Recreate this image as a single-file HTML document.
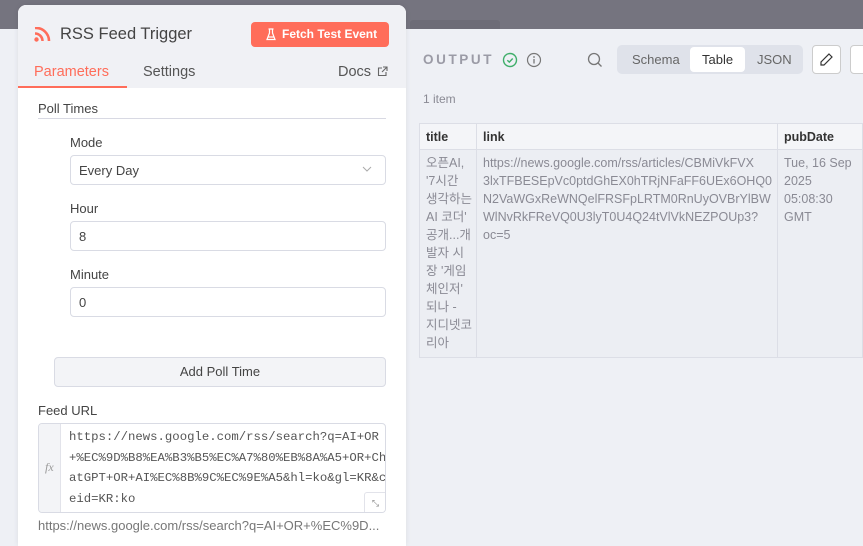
<!DOCTYPE html>
<html style="height:546px;overflow:hidden"><head><meta charset="utf-8"><style>
*{box-sizing:border-box;margin:0;padding:0}
body{width:863px;height:546px;overflow:hidden;background:#eef0f5;font-family:"Liberation Sans","Noto Sans CJK KR",sans-serif;position:relative}
.abs{position:absolute}
.strip{left:0;top:0;width:863px;height:29px;background:#75747f}
.panel{left:18px;top:5px;width:388px;height:541px;background:#fff;border-radius:8px 8px 0 0;overflow:hidden;box-shadow:0 0 6px rgba(0,0,0,.08)}
.head{left:0;top:0;width:388px;height:83px;background:#f0f1f5}
.lbl{font-size:13px;color:#444}
.inp{border:1px solid #d9dbe4;border-radius:4px;height:30px;font-size:13px;color:#444;padding:7px 8px;background:#fff}
.mono{font-family:"Liberation Mono",monospace;font-size:12.3px;color:#555;line-height:20.5px}
.cell{font-size:12.5px;color:#8a8a94;line-height:18px}
</style></head><body>
<div class="abs strip"></div>
<div class="abs" style="left:410px;top:20px;width:90px;height:9px;background:#6d6c77;border-radius:3px 3px 0 0"></div>

<div class="abs panel">
 <div class="abs head"></div>
 <svg class="abs" style="left:16px;top:22px" width="17" height="15" viewBox="0 0 17 15"><circle cx="2.5" cy="12.5" r="2.2" fill="#ff6d5a"/><path d="M1 6.5a7.5 7.5 0 0 1 7.5 7.5" stroke="#ff6d5a" stroke-width="2.6" fill="none"/><path d="M1 1a13 13 0 0 1 14 13" stroke="#ff6d5a" stroke-width="2.6" fill="none"/></svg>
 <div class="abs" style="left:42px;top:20px;font-size:16.5px;color:#444">RSS Feed Trigger</div>
 <div class="abs" style="left:233px;top:17px;width:138px;height:25px;background:#ff6d5a;border-radius:4px;color:#fff;font-size:12px;font-weight:bold;line-height:25px;padding-left:31px;white-space:nowrap">Fetch Test Event</div>
 <svg class="abs" style="left:248px;top:23px" width="10" height="13" viewBox="0 0 10 13"><path d="M3.5 1v4L1 11.5h8L6.5 5V1M2.5 1h5M2 9h6" stroke="#fff" stroke-width="1.2" fill="none"/></svg>
 <div class="abs" style="left:16px;top:59px;font-size:14.5px;color:#ff6d5a">Parameters</div>
 <div class="abs" style="left:0;top:81px;width:109px;height:2px;background:#ff6d5a"></div>
 <div class="abs" style="left:125px;top:59px;font-size:14.5px;color:#555">Settings</div>
 <div class="abs" style="left:320px;top:59px;font-size:14.5px;color:#555">Docs</div>
 <svg class="abs" style="left:359px;top:61px" width="11" height="11" viewBox="0 0 11 11"><path d="M5 2H1.5v7.5H9V6M6 1h4v4M10 1L5 6" stroke="#666" stroke-width="1.1" fill="none"/></svg>

 <div class="abs lbl" style="left:20px;top:96px">Poll Times</div>
 <div class="abs" style="left:20px;top:113px;width:348px;height:1px;background:#d8d9e3"></div>

 <div class="abs lbl" style="left:52px;top:130px">Mode</div>
 <div class="abs inp" style="left:52px;top:150px;width:316px">Every Day</div>
 <svg class="abs" style="left:344px;top:161px" width="10" height="7" viewBox="0 0 10 7"><path d="M1 1l4 4 4-4" stroke="#aaa" stroke-width="1" fill="none"/></svg>
 <div class="abs lbl" style="left:52px;top:196px">Hour</div>
 <div class="abs inp" style="left:52px;top:216px;width:316px">8</div>
 <div class="abs lbl" style="left:52px;top:262px">Minute</div>
 <div class="abs inp" style="left:52px;top:282px;width:316px">0</div>

 <div class="abs" style="left:36px;top:352px;width:332px;height:30px;background:#f3f4f7;border:1px solid #d9dbe4;border-radius:4px;text-align:center;line-height:28px;font-size:13px;color:#444">Add Poll Time</div>

 <div class="abs lbl" style="left:20px;top:398px">Feed URL</div>
 <div class="abs" style="left:20px;top:418px;width:348px;height:90px;border:1px solid #d9dbe4;border-radius:4px;background:#fff;overflow:hidden">
  <div class="abs" style="left:0;top:0;width:22px;height:90px;background:#f3f4f7;border-right:1px solid #e2e3ea"></div>
  <div class="abs" style="left:6px;top:36px;font-family:'Liberation Serif',serif;font-style:italic;font-size:12px;color:#999">fx</div>
  <div class="abs mono" style="left:30px;top:3px;width:320px;word-break:break-all">https://news.google.com/rss/search?q=AI+OR+%EC%9D%B8%EA%B3%B5%EC%A7%80%EB%8A%A5+OR+ChatGPT+OR+AI%EC%8B%9C%EC%9E%A5&amp;hl=ko&amp;gl=KR&amp;ceid=KR:ko</div>
  <div class="abs" style="left:325px;top:68px;width:22px;height:21px;border-left:1px solid #e2e3ea;border-top:1px solid #e2e3ea;border-radius:3px 0 0 0;background:#fff;font-size:9px;color:#888;text-align:center;line-height:20px">⤡</div>
 </div>
 <div class="abs" style="left:20px;top:513px;font-size:13px;color:#777">https://news.google.com/rss/search?q=AI+OR+%EC%9D...</div>
</div>

<div class="abs" style="left:423px;top:52px;font-size:13.5px;font-weight:bold;letter-spacing:2.6px;color:#9b9ba6">OUTPUT</div>
<svg class="abs" style="left:502px;top:52px" width="16" height="16" viewBox="0 0 16 16"><circle cx="8" cy="8" r="6.5" stroke="#3fae6a" stroke-width="1.4" fill="none"/><path d="M5.3 8.2l2 1.9 3.4-3.6" stroke="#3fae6a" stroke-width="1.4" fill="none"/></svg>
<svg class="abs" style="left:526px;top:52px" width="16" height="16" viewBox="0 0 16 16"><circle cx="8" cy="8" r="6.5" stroke="#777" stroke-width="1.2" fill="none"/><path d="M8 7v4.5" stroke="#777" stroke-width="1.3"/><circle cx="8" cy="5" r=".9" fill="#777"/></svg>
<svg class="abs" style="left:587px;top:52px" width="16" height="16" viewBox="0 0 16 16"><circle cx="7" cy="7" r="5.5" stroke="#777" stroke-width="1.3" fill="none"/><path d="M11 11l3.5 3.5" stroke="#777" stroke-width="1.3"/></svg>
<div class="abs" style="left:617px;top:45px;width:186px;height:29px;background:#dfe2ea;border-radius:5px"></div>
<div class="abs" style="left:690px;top:47px;width:55px;height:25px;background:#fff;border-radius:4px"></div>
<div class="abs" style="left:632px;top:52px;font-size:13px;color:#666">Schema</div>
<div class="abs" style="left:702px;top:52px;font-size:13px;color:#333">Table</div>
<div class="abs" style="left:757px;top:52px;font-size:13px;color:#666">JSON</div>
<div class="abs" style="left:812px;top:45px;width:29px;height:29px;background:#fff;border:1px solid #ccc;border-radius:4px"></div>
<svg class="abs" style="left:819px;top:52px" width="15" height="15" viewBox="0 0 15 15"><path d="M10 2l3 3-8 8H2v-3z" stroke="#333" stroke-width="1.2" fill="none"/></svg>
<div class="abs" style="left:850px;top:45px;width:29px;height:29px;background:#fff;border:1px solid #ccc;border-radius:4px"></div>
<div class="abs" style="left:423px;top:92px;font-size:12px;color:#8a8a94">1 item</div>

<div class="abs" style="left:419px;top:123px;width:450px;height:235px;border:1px solid #dcdee6;background:#eceef3"></div>
<div class="abs" style="left:420px;top:124px;width:449px;height:26px;background:#f4f5f8;border-bottom:1px solid #dcdee6"></div>
<div class="abs" style="left:476px;top:124px;width:1px;height:234px;background:#dcdee6"></div>
<div class="abs" style="left:777px;top:124px;width:1px;height:234px;background:#dcdee6"></div>
<div class="abs" style="left:862px;top:124px;width:1px;height:234px;background:#dcdee6"></div>
<div class="abs" style="left:426px;top:130px;font-size:12.5px;font-weight:bold;color:#333">title</div>
<div class="abs" style="left:483px;top:130px;font-size:12.5px;font-weight:bold;color:#333">link</div>
<div class="abs" style="left:784px;top:130px;font-size:12.5px;font-weight:bold;color:#333">pubDate</div>
<div class="abs cell" style="left:426px;top:154px;width:50px">오픈AI,<br>'7시간<br>생각하는<br>AI 코더'<br>공개...개<br>발자 시<br>장 '게임<br>체인저'<br>되나 -<br>지디넷코<br>리아</div>
<div class="abs cell" style="left:483px;top:154px;width:292px;white-space:nowrap">https://news.google.com/rss/articles/CBMiVkFVX<br>3lxTFBESEpVc0ptdGhEX0hTRjNFaFF6UEx6OHQ0<br>N2VaWGxReWNQelFRSFpLRTM0RnUyOVBrYlBW<br>WlNvRkFReVQ0U3lyT0U4Q24tVlVkNEZPOUp3?<br>oc=5</div>
<div class="abs cell" style="left:784px;top:154px;width:78px;white-space:nowrap">Tue, 16 Sep<br>2025<br>05:08:30<br>GMT</div>
</body></html>
